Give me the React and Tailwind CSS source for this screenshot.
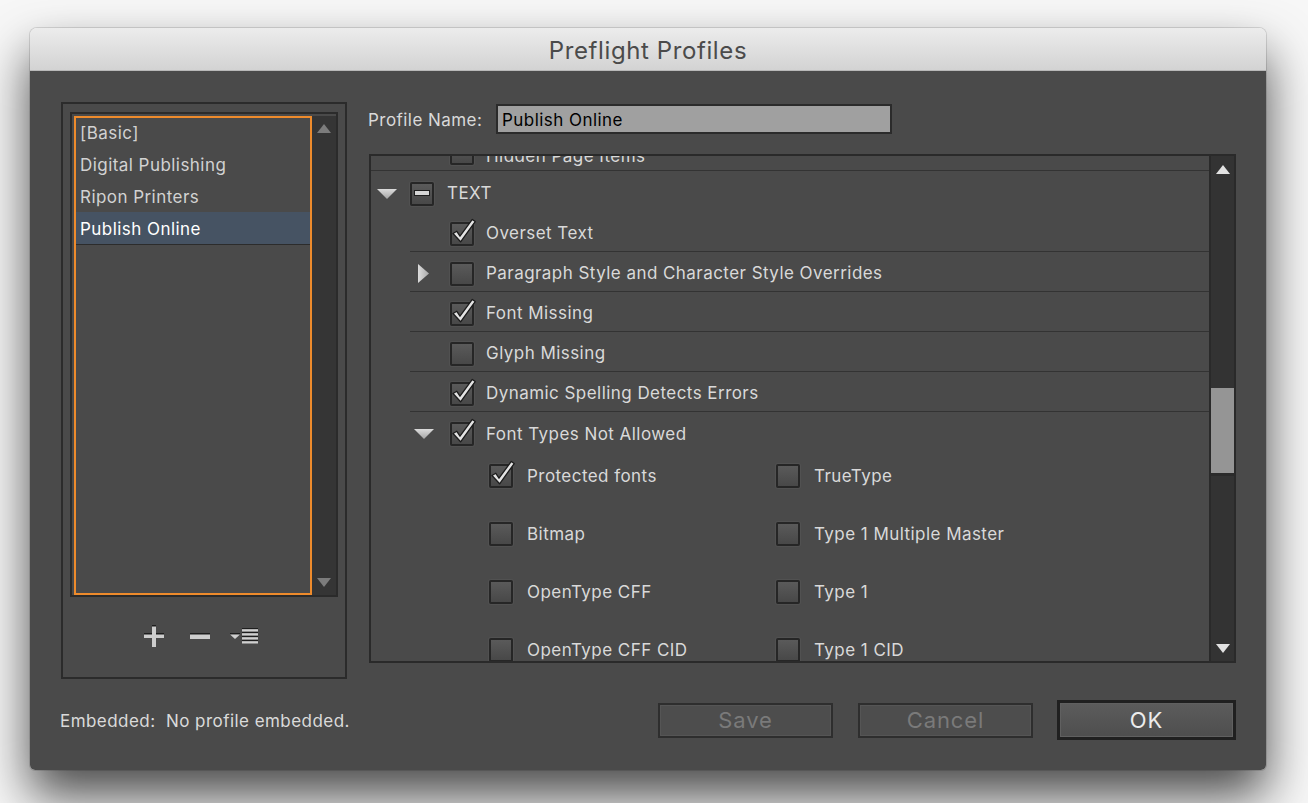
import React from "react";

const CheckMark = () => (
  <svg
    className="absolute left-[-2px] top-[-2px] overflow-visible"
    width="24"
    height="24"
    viewBox="0 0 24 24"
  >
    <path
      d="M3 11.5 L6.8 9.3 L10 14.2 L22.3 -2.6 L25.2 -0.4 L10.6 19.8 Z"
      fill="#e4e4e4"
      stroke="#1c1c1c"
      strokeWidth="1.3"
      strokeLinejoin="round"
    />
  </svg>
);

const Box = ({ checked, minus }) => (
  <div className="relative w-[24px] h-[24px] shrink-0 rounded-[2px] border-2 border-[#262626] bg-gradient-to-b from-[#5a5a5a] to-[#484848] shadow-[0_0_0_1px_#515151]">
    {checked && <CheckMark />}
    {minus && (
      <div className="absolute left-[2px] top-[6px] w-[16px] h-[6px] bg-[#d6d6d6] border border-[#202020]" />
    )}
  </div>
);

const DownTri = () => (
  <svg width="20" height="10" viewBox="0 0 20 10">
    <defs>
      <linearGradient id="dt" x1="0" y1="0" x2="0" y2="1">
        <stop offset="0" stopColor="#dcdcdc" />
        <stop offset="1" stopColor="#a4a4a4" />
      </linearGradient>
    </defs>
    <polygon points="0,0 20,0 10,10" fill="url(#dt)" />
  </svg>
);

const RightTri = () => (
  <svg width="11" height="19" viewBox="0 0 11 19">
    <defs>
      <linearGradient id="rt" x1="0" y1="0" x2="1" y2="0">
        <stop offset="0" stopColor="#dcdcdc" />
        <stop offset="1" stopColor="#a8a8a8" />
      </linearGradient>
    </defs>
    <polygon points="0,0 11,9.5 0,19" fill="url(#rt)" />
  </svg>
);

const ArrowUp = ({ color }) => (
  <svg width="14" height="9" viewBox="0 0 14 9">
    <polygon points="7,0 14,9 0,9" fill={color} />
  </svg>
);
const ArrowDown = ({ color }) => (
  <svg width="14" height="9" viewBox="0 0 14 9">
    <polygon points="0,0 14,0 7,9" fill={color} />
  </svg>
);

const TreeRow = ({ label, checked, expander, last }) => (
  <div
    className={
      "h-[40px] flex items-center pt-[4px] " +
      (last ? "" : "border-b border-[#333333]")
    }
  >
    <div className="w-[40px] h-full flex items-center shrink-0">
      {expander === "right" && (
        <div className="ml-[8px] flex">
          <RightTri />
        </div>
      )}
      {expander === "down" && (
        <div className="ml-[4px] flex">
          <DownTri />
        </div>
      )}
    </div>
    <Box checked={checked} />
    <span className="ml-[12px] text-[17px] text-[#d9d9d9] leading-none">
      {label}
    </span>
  </div>
);

const GridItem = ({ label, checked }) => (
  <div className="h-[58px] flex items-center pt-[2px]">
    <Box checked={checked} />
    <span className="ml-[14px] text-[17px] text-[#d9d9d9] leading-none">
      {label}
    </span>
  </div>
);

export default function App() {
  return (
    <div className="w-[1308px] h-[803px] overflow-hidden bg-[#f7f7f7] pt-[28px] pl-[30px] font-[Inter,'Liberation_Sans',sans-serif] tracking-[0.45px]">
      <div className="w-[1236px] h-[742px] rounded-t-[7px] rounded-b-[5px] overflow-hidden flex flex-col shadow-[0_26px_50px_rgba(0,0,0,0.7),0_0_0_1px_rgba(0,0,0,0.12)]">
        {/* Title bar */}
        <div className="h-[43px] shrink-0 bg-gradient-to-b from-[#ececec] to-[#d3d3d3] border-b border-[#b8b8b8] flex items-center justify-center pt-[3px] text-[24px] tracking-[0.6px] text-[#4b4b4b]">
          Preflight Profiles
        </div>

        {/* Body */}
        <div className="flex-1 bg-[#4a4a4a] pt-[31px] pl-[31px] pr-[30px] flex flex-col">
          <div className="flex items-start">
            {/* Left panel */}
            <div className="w-[286px] h-[577px] shrink-0 border-2 border-[#2b2b2b] pt-[8px] pl-[7px]">
              <div className="w-[268px] h-[485px] border-2 border-[#2b2b2b] pl-[2px] pt-[2px] flex">
                <div className="w-[238px] h-full border-2 border-[#ee8b2c] overflow-hidden">
                  <div className="mt-[-2px]">
                    {["[Basic]", "Digital Publishing", "Ripon Printers"].map(
                      (t) => (
                        <div
                          key={t}
                          className="h-[32px] flex items-center pt-[4px] pl-[4px] text-[17px] text-[#d2d2d2]"
                        >
                          {t}
                        </div>
                      )
                    )}
                    <div className="h-[33px] flex items-center pt-[3px] pl-[4px] text-[17px] text-white bg-[#465363] border-b border-[#2c2c2c]">
                      Publish Online
                    </div>
                  </div>
                </div>
                <div className="w-[24px] h-full bg-[#353535] flex flex-col items-center justify-between pt-[8px] pb-[8px]">
                  <ArrowUp color="#7c7c7c" />
                  <ArrowDown color="#7c7c7c" />
                </div>
              </div>
              {/* icons */}
              <div className="mt-[28px] h-[22px] flex items-center pl-[74px]">
                <svg width="20" height="22" viewBox="0 0 20 22">
                  <rect x="8" y="0" width="4" height="22" fill="#cdcdcd" />
                  <rect x="8" y="0" width="4" height="1.5" fill="#1e1e1e" />
                  <rect x="0" y="8" width="20" height="5" fill="#cdcdcd" />
                  <rect x="0" y="8" width="8" height="1.5" fill="#1e1e1e" />
                  <rect x="12" y="8" width="8" height="1.5" fill="#1e1e1e" />
                </svg>
                <svg
                  className="ml-[26px]"
                  width="20"
                  height="6"
                  viewBox="0 0 20 6"
                >
                  <rect x="0" y="0" width="20" height="6" fill="#cdcdcd" />
                  <rect x="0" y="0" width="20" height="1.5" fill="#1e1e1e" />
                </svg>
                <svg
                  className="ml-[20px]"
                  width="28"
                  height="16"
                  viewBox="0 0 28 16"
                >
                  <rect x="0" y="5" width="10" height="1.5" fill="#1e1e1e" />
                  <polygon points="0,6.5 10,6.5 5,11" fill="#cdcdcd" />
                  {[0, 4, 8, 12].map((y) => (
                    <g key={y}>
                      <rect x="12" y={y} width="16" height="1.2" fill="#1e1e1e" />
                      <rect x="12" y={y + 1.2} width="16" height="2.3" fill="#d0d0d0" />
                    </g>
                  ))}
                </svg>
              </div>
            </div>

            {/* Right column */}
            <div className="ml-[21px] w-[868px] flex flex-col">
              <div className="mt-[2px] h-[30px] flex items-center">
                <div className="w-[128px] pt-[4px] text-[17px] text-[#d9d9d9]">
                  Profile Name:
                </div>
                <div className="w-[396px] h-[30px] border-2 border-[#2b2b2b] bg-[#a0a0a0] pl-[4px] pt-[4px] flex items-center text-[17px] text-black">
                  Publish Online
                </div>
              </div>

              <div className="mt-[20px] ml-[1px] w-[867px] h-[509px] border-2 border-[#2a2a2a] flex">
                <div className="flex-1 h-full overflow-hidden">
                  {/* partially hidden row */}
                  <div className="mt-[-25px] h-[40px] flex items-center pt-[4px] border-b border-[#333333] pl-[79px]">
                    <Box />
                    <span className="relative top-[4px] ml-[12px] text-[17px] text-[#d9d9d9] leading-none">
                      Hidden Page Items
                    </span>
                  </div>
                  {/* TEXT */}
                  <div className="h-[41px] flex items-center pt-[4px] pl-[6px]">
                    <DownTri />
                    <div className="ml-[13px]">
                      <Box minus />
                    </div>
                    <span className="ml-[13px] text-[17px] text-[#d9d9d9] leading-none">
                      TEXT
                    </span>
                  </div>
                  <div className="ml-[39px]">
                    <TreeRow label="Overset Text" checked />
                    <TreeRow
                      label="Paragraph Style and Character Style Overrides"
                      expander="right"
                    />
                    <TreeRow label="Font Missing" checked />
                    <TreeRow label="Glyph Missing" />
                    <TreeRow label="Dynamic Spelling Detects Errors" checked />
                    <TreeRow
                      label="Font Types Not Allowed"
                      checked
                      expander="down"
                      last
                    />
                    <div className="mt-[-6px] pl-[79px] grid grid-cols-[287px_287px]">
                      <GridItem label="Protected fonts" checked />
                      <GridItem label="TrueType" />
                      <GridItem label="Bitmap" />
                      <GridItem label="Type 1 Multiple Master" />
                      <GridItem label="OpenType CFF" />
                      <GridItem label="Type 1" />
                      <GridItem label="OpenType CFF CID" />
                      <GridItem label="Type 1 CID" />
                    </div>
                  </div>
                </div>
                {/* scrollbar */}
                <div className="w-[25px] h-full border-l-2 border-[#2a2a2a] bg-[#333333] flex flex-col items-center relative">
                  <div className="mt-[9px]">
                    <ArrowUp color="#e2e2e2" />
                  </div>
                  <div className="absolute left-0 right-0 top-[232px] h-[88px] bg-[#959595] border-b-[3px] border-[#2b2b2b]" />
                  <div className="mt-auto mb-[8px]">
                    <ArrowDown color="#e2e2e2" />
                  </div>
                </div>
              </div>
            </div>
          </div>

          {/* Bottom row */}
          <div className="mt-[21px] h-[40px] flex items-center">
            <div className="ml-[-1px] pt-[3px] text-[17px] text-[#dadada]">
              Embedded:&nbsp; No profile embedded.
            </div>
            <div className="flex-1" />
            <div className="w-[175px] h-[35px] border-2 border-[#2e2e2e] bg-[#4d4d4d] shadow-[inset_0_0_0_1px_#555555] flex items-center justify-center text-[22px] tracking-[0.9px] text-[#7a7a7a]">
              Save
            </div>
            <div className="ml-[25px] w-[175px] h-[35px] border-2 border-[#2e2e2e] bg-[#4d4d4d] shadow-[inset_0_0_0_1px_#555555] flex items-center justify-center text-[22px] tracking-[0.9px] text-[#7a7a7a]">
              Cancel
            </div>
            <div className="ml-[24px] w-[179px] h-[40px] border-[3px] border-[#202020] bg-gradient-to-b from-[#5c5c5c] to-[#4e4e4e] shadow-[inset_0_0_0_1px_#606060] flex items-center justify-center text-[22px] tracking-[0.9px] text-[#ececec]">
              OK
            </div>
          </div>
        </div>
      </div>
    </div>
  );
}
